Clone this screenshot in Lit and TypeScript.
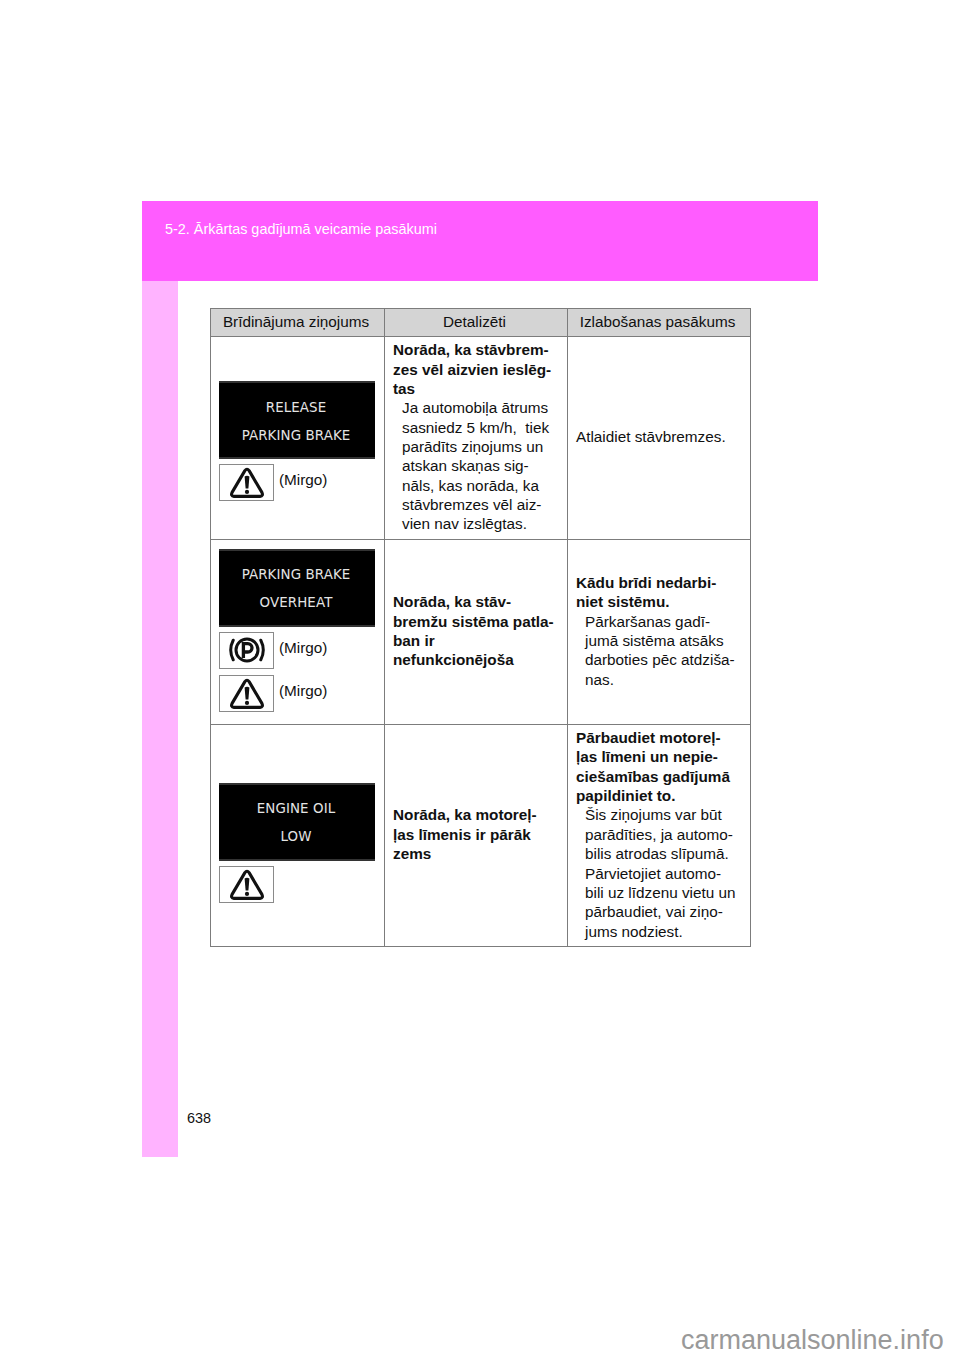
import { LitElement, html, css, svg } from "lit";
import { customElement } from "lit/decorators.js";

const warn = svg`<svg class="ico" width="34" height="31" viewBox="0 0 34 31"><path d="M14.9 3.6 Q17 .9 19.1 3.6 L31.9 25.4 Q33.6 29 30 29.4 H4 Q.4 29 2.1 25.4 Z" fill="none" stroke="#111" stroke-width="3.1" stroke-linejoin="round"/><path d="M14.6 9.5 Q17 7.8 19.4 9.5 L18.4 21.5 h-2.8 Z" fill="#111"/><circle cx="17" cy="24.9" r="2.1" fill="#111"/></svg>`;

const park = svg`<svg class="ico" width="36" height="28" viewBox="0 0 36 28"><circle cx="18" cy="14" r="11" fill="none" stroke="#111" stroke-width="3"/><path d="M14.4 22 V7.6 h4.4 a4.1 4.1 0 0 1 0 8.4 h-4.4" fill="none" stroke="#111" stroke-width="3.3"/><path d="M4.2 4.2 Q-.8 14 4.2 23.8 M31.8 4.2 Q36.8 14 31.8 23.8" fill="none" stroke="#111" stroke-width="3" stroke-linecap="round"/></svg>`;

@customElement("app-root")
export class AppRoot extends LitElement {
  static styles = css`
    :host { display: block; width: 960px; height: 1358px; overflow: hidden; position: relative; background: #fff; font-family: "Liberation Sans", Arial, sans-serif; color: #111; font-size: 15.3px; line-height: 19.35px; }
    .sheet { margin-left: 142px; padding-top: 201px; width: 676px; }
    .band { height: 80px; background: #ff5cff; color: #fff; box-sizing: border-box; padding: 19px 0 0 23px; font-size: 14.4px; line-height: 18px; }
    .body { display: flex; height: 876px; }
    .side { width: 36px; background: #ffb3ff; }
    .main { flex: 1; display: flex; flex-direction: column; justify-content: space-between; padding-top: 27px; }
    table { border-collapse: collapse; table-layout: fixed; width: 540px; margin-left: 32px; }
    th, td { border: 1px solid #7c7c7c; padding: 0 8px 2px; }
    th { background: #d4d4d4; font-weight: 400; height: 25px; text-align: center; padding: 0 3px 2px 0; }
    td { vertical-align: middle; }
    .c1 { width: 170px; } .c2, .c3 { width: 179px; }
    .r1 { height: 203px; } .r2 { height: 185px; } .r3 { height: 222px; }
    .r1 .msg { padding-top: 8px; } .r3 .msg { padding-top: 16px; } .r2 .msg { padding-bottom: 4px; }
    .lcd { width: 156px; height: 78px; background: #000; border-top: 2px solid #333; border-bottom: 2px solid #333; box-sizing: border-box; padding: 3px 2px 0 0; color: #e4e4e4; font-family: "DejaVu Sans", sans-serif; font-size: 13.4px; letter-spacing: 0.1px; line-height: 28px; text-align: center; display: flex; flex-direction: column; justify-content: center; white-space: pre; }
    .row { display: flex; gap: 5px; margin-top: 5px; }
    .row + .row { margin-top: 6px; }
    .box { width: 55px; height: 37px; box-sizing: border-box; border: 1px solid #8a8a8a; display: flex; align-items: center; justify-content: center; }
    .lab { line-height: 19px; margin-top: 6px; }
    b { font-weight: 700; display: block; }
    .ind { padding-left: 9px; }
    .pg { padding: 0 0 30px 9px; font-size: 14.4px; line-height: 18px; }
    .wm { position: absolute; left: 681px; top: 1325px; font-size: 27px; line-height: 31px; color: #999; white-space: nowrap; }
  `;

  private lcd(a: string, b: string) {
    return html`<div class="lcd"><div>${a}</div><div>${b}</div></div>`;
  }

  private icon(i: unknown, label: string) {
    return html`<div class="row"><div class="box">${i}</div>${label ? html`<div class="lab">${label}</div>` : ""}</div>`;
  }

  render() {
    return html`
      <div class="sheet">
        <div class="band">5-2. Ārkārtas gadījumā veicamie pasākumi</div>
        <div class="body">
          <div class="side"></div>
          <div class="main">
            <table>
              <thead><tr>
                <th class="c1">Brīdinājuma ziņojums</th>
                <th class="c2">Detalizēti</th>
                <th class="c3">Izlabošanas pasākums</th>
              </tr></thead>
              <tbody>
                <tr class="r1">
                  <td class="msg">${this.lcd("RELEASE", "PARKING BRAKE")}${this.icon(warn, "(Mirgo)")}</td>
                  <td><b>Norāda, ka stāvbrem-<br>zes vēl aizvien ieslēg-<br>tas</b>
                    <div class="ind">Ja automobiļa ātrums<br>sasniedz 5 km/h,&nbsp; tiek<br>parādīts ziņojums un<br>atskan skaņas sig-<br>nāls, kas norāda, ka<br>stāvbremzes vēl aiz-<br>vien nav izslēgtas.</div></td>
                  <td>Atlaidiet stāvbremzes.</td>
                </tr>
                <tr class="r2">
                  <td class="msg">${this.lcd("PARKING BRAKE", "OVERHEAT")}${this.icon(park, "(Mirgo)")}${this.icon(warn, "(Mirgo)")}</td>
                  <td><b>Norāda, ka stāv-<br>bremžu sistēma patla-<br>ban ir<br>nefunkcionējoša</b></td>
                  <td><b>Kādu brīdi nedarbi-<br>niet sistēmu.</b>
                    <div class="ind">Pārkaršanas gadī-<br>jumā sistēma atsāks<br>darboties pēc atdziša-<br>nas.</div></td>
                </tr>
                <tr class="r3">
                  <td class="msg">${this.lcd("ENGINE OIL", "LOW")}${this.icon(warn, "")}</td>
                  <td><b>Norāda, ka motoreļ-<br>ļas līmenis ir pārāk<br>zems</b></td>
                  <td><b>Pārbaudiet motoreļ-<br>ļas līmeni un nepie-<br>ciešamības gadījumā<br>papildiniet to.</b>
                    <div class="ind">Šis ziņojums var būt<br>parādīties, ja automo-<br>bilis atrodas slīpumā.<br>Pārvietojiet automo-<br>bili uz līdzenu vietu un<br>pārbaudiet, vai ziņo-<br>jums nodziest.</div></td>
                </tr>
              </tbody>
            </table>
            <div class="pg">638</div>
          </div>
        </div>
      </div>
      <div class="wm">carmanualsonline.info</div>
    `;
  }
}
